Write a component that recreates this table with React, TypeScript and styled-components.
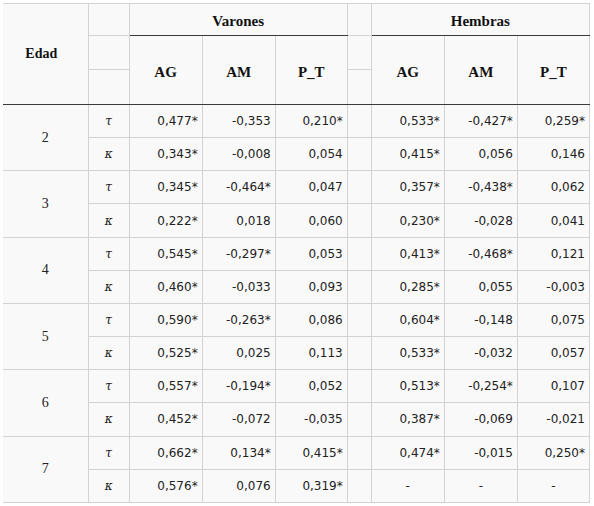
import styled, { createGlobalStyle } from "styled-components";

/**
 * Types
 */
type Pair = [string, string, string];
type AgeGroup = {
  age: string;
  tau: { v: Pair; h: Pair };
  kappa: { v: Pair; h: Pair };
};

/**
 * Data
 */
const groups: AgeGroup[] = [
  {
    age: "2",
    tau: { v: ["0,477*", "-0,353", "0,210*"], h: ["0,533*", "-0,427*", "0,259*"] },
    kappa: { v: ["0,343*", "-0,008", "0,054"], h: ["0,415*", "0,056", "0,146"] },
  },
  {
    age: "3",
    tau: { v: ["0,345*", "-0,464*", "0,047"], h: ["0,357*", "-0,438*", "0,062"] },
    kappa: { v: ["0,222*", "0,018", "0,060"], h: ["0,230*", "-0,028", "0,041"] },
  },
  {
    age: "4",
    tau: { v: ["0,545*", "-0,297*", "0,053"], h: ["0,413*", "-0,468*", "0,121"] },
    kappa: { v: ["0,460*", "-0,033", "0,093"], h: ["0,285*", "0,055", "-0,003"] },
  },
  {
    age: "5",
    tau: { v: ["0,590*", "-0,263*", "0,086"], h: ["0,604*", "-0,148", "0,075"] },
    kappa: { v: ["0,525*", "0,025", "0,113"], h: ["0,533*", "-0,032", "0,057"] },
  },
  {
    age: "6",
    tau: { v: ["0,557*", "-0,194*", "0,052"], h: ["0,513*", "-0,254*", "0,107"] },
    kappa: { v: ["0,452*", "-0,072", "-0,035"], h: ["0,387*", "-0,069", "-0,021"] },
  },
  {
    age: "7",
    tau: { v: ["0,662*", "0,134*", "0,415*"], h: ["0,474*", "-0,015", "0,250*"] },
    kappa: { v: ["0,576*", "0,076", "0,319*"], h: ["-", "-", "-"] },
  },
];

const colWidths = [85, 41, 73, 73, 72, 24, 73, 73, 72];

/**
 * Styled
 */
const GlobalStyle = createGlobalStyle`
  html, body {
    margin: 0;
    padding: 0;
    background: #ffffff;
  }
`;

const Page = styled.div`
  padding: 3px 0 0 3px;
`;

const Table = styled.table`
  border-collapse: collapse;
  table-layout: fixed;
  width: 587px;
  border-top: 1px solid #000;
  border-bottom: 1px solid #9a9a9a;
  background: repeating-conic-gradient(#f2f2f2 0 25%, #ffffff 0 50%) 0 0 / 2px 2px;
`;

const Cell = styled.td`
  border: 1px solid #d3d3d3;
  padding: 0;
`;

const HeadCell = styled(Cell)<{ $dark?: boolean; $first?: boolean; $size?: number; $drop?: number }>`
  font-family: "Liberation Serif", "Times New Roman", serif;
  font-weight: bold;
  font-size: ${(p) => p.$size ?? 15}px;
  color: #111;
  text-align: center;
  padding-top: ${(p) => p.$drop ?? 0}px;
  padding-right: ${(p) => (p.$first ? 8 : 0)}px;
  border-bottom-color: ${(p) => (p.$dark ? "#3a3a3a" : "#d3d3d3")};
  border-left: ${(p) => (p.$first ? "none" : "1px solid #d3d3d3")};
`;

const BlankHead = styled(Cell)<{ $dark?: boolean }>`
  border-bottom-color: ${(p) => (p.$dark ? "#3a3a3a" : "#d3d3d3")};
`;

const AgeCell = styled(Cell)`
  border-left: none;
  font-family: "Liberation Serif", "Times New Roman", serif;
  font-size: 14px;
  color: #222;
  text-align: center;
`;

const SymCell = styled(Cell)`
  font-family: "DejaVu Serif", "Liberation Serif", serif;
  font-style: italic;
  font-size: 12px;
  color: #222;
  text-align: center;
`;

const NumCell = styled(Cell)<{ $center?: boolean }>`
  font-family: "DejaVu Sans", Verdana, sans-serif;
  font-size: 12px;
  color: #222;
  text-align: ${(p) => (p.$center ? "center" : "right")};
  padding-right: ${(p) => (p.$center ? "0" : "4px")};
  white-space: nowrap;
`;

const HeadRow = styled.tr<{ $h: number }>`
  height: ${(p) => p.$h}px;
`;

const BodyRow = styled.tr`
  height: 33.17px;
`;

const Values = ({ vals }: { vals: Pair }) => (
  <>
    {vals.map((val, i) => (
      <NumCell key={i} $center={val === "-"}>
        {val}
      </NumCell>
    ))}
  </>
);

const App = () => {
  return (
    <Page>
      <GlobalStyle />
      <Table>
        <colgroup>
          {colWidths.map((w, i) => (
            <col key={i} style={{ width: w }} />
          ))}
        </colgroup>
        <thead>
          <HeadRow $h={32}>
            <HeadCell rowSpan={3} $dark $first $size={14}>
              Edad
            </HeadCell>
            <BlankHead />
            <HeadCell colSpan={3} $dark $drop={4}>
              Varones
            </HeadCell>
            <BlankHead />
            <HeadCell colSpan={3} $dark $drop={4}>
              Hembras
            </HeadCell>
          </HeadRow>
          <HeadRow $h={34}>
            <BlankHead />
            <HeadCell rowSpan={2} $dark $drop={4}>AG</HeadCell>
            <HeadCell rowSpan={2} $dark $drop={4}>AM</HeadCell>
            <HeadCell rowSpan={2} $dark $drop={4}>P_T</HeadCell>
            <BlankHead />
            <HeadCell rowSpan={2} $dark $drop={4}>AG</HeadCell>
            <HeadCell rowSpan={2} $dark $drop={4}>AM</HeadCell>
            <HeadCell rowSpan={2} $dark $drop={4}>P_T</HeadCell>
          </HeadRow>
          <HeadRow $h={35}>
            <BlankHead $dark />
            <BlankHead $dark />
          </HeadRow>
        </thead>
        <tbody>
          {groups.map((g) => (
            <>
              <BodyRow key={g.age + "t"}>
                <AgeCell rowSpan={2}>{g.age}</AgeCell>
                <SymCell>τ</SymCell>
                <Values vals={g.tau.v} />
                <Cell />
                <Values vals={g.tau.h} />
              </BodyRow>
              <BodyRow key={g.age + "k"}>
                <SymCell>κ</SymCell>
                <Values vals={g.kappa.v} />
                <Cell />
                <Values vals={g.kappa.h} />
              </BodyRow>
            </>
          ))}
        </tbody>
      </Table>
    </Page>
  );
};

export default App;
